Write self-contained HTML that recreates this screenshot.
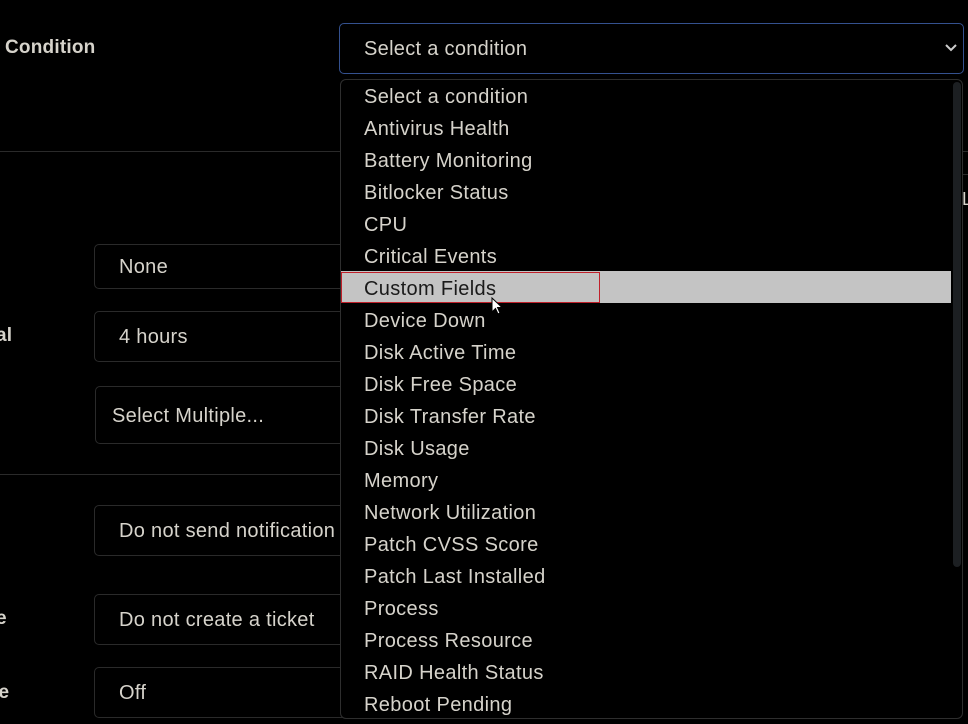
<!DOCTYPE html>
<html><head><style>
body{margin:0;width:968px;height:724px;background:#000;overflow:hidden;position:relative;font-family:"Liberation Sans",sans-serif;color:#d6d3cb}
.a{position:absolute}
.box{position:absolute;border:1px solid #2a2a2a;border-radius:5px;box-sizing:border-box;font-size:20px;letter-spacing:0.3px;padding-left:24px;display:flex;align-items:center;padding-top:2px;white-space:nowrap;overflow:hidden}
.lbl{position:absolute;font-weight:bold;font-size:19px;letter-spacing:0.2px}
.it{position:absolute;left:364px;font-size:20px;letter-spacing:0.35px;line-height:32px;height:32px}
</style></head><body>
<div class="lbl" style="left:5px;top:37px">Condition</div>
<div class="a" style="left:0;top:151px;width:340px;height:1px;background:#2a2a2a"></div>
<div class="a" style="left:0;top:474px;width:340px;height:1px;background:#2a2a2a"></div>
<div class="a" style="left:963px;top:151px;width:5px;height:1px;background:#2a2a2a"></div>
<div class="a" style="left:963px;top:174px;width:5px;height:1px;background:#2a2a2a"></div>
<div class="a" style="left:962px;top:189px;font-size:18px">L</div>
<div class="lbl" style="left:-4px;top:325px">al</div>
<div class="lbl" style="left:-4px;top:608px">e</div>
<div class="lbl" style="left:-8px;top:682px">te</div>
<div class="box" style="left:94px;top:244px;width:300px;height:45px">None</div>
<div class="box" style="left:94px;top:311px;width:300px;height:51px">4 hours</div>
<div class="box" style="left:95px;top:386px;width:300px;height:58px;padding-left:16px">Select Multiple...</div>
<div class="box" style="left:94px;top:505px;width:300px;height:51px">Do not send notification</div>
<div class="box" style="left:94px;top:594px;width:300px;height:51px">Do not create a ticket</div>
<div class="box" style="left:94px;top:667px;width:300px;height:51px">Off</div>
<div class="box" style="left:339px;top:23px;width:625px;height:51px;border:1px solid #34518f;border-radius:5px;overflow:visible">Select a condition
<svg class="a" style="left:604px;top:19px" width="14" height="10" viewBox="0 0 14 10"><path d="M2 2 L7 7 L12 2" stroke="#ccc" stroke-width="2" fill="none"/></svg></div>
<div class="a" style="left:340px;top:79px;width:623px;height:640px;border:1px solid #2e2e2e;border-radius:6px;box-sizing:border-box;background:#000"></div>
<div class="a" style="left:953px;top:82px;width:8px;height:485px;background:#1c1f22;border-radius:4px"></div>
<div class="a" style="left:341px;top:271px;width:610px;height:32px;background:#c4c4c4"></div>
<div class="a" style="left:341px;top:272px;width:259px;height:31px;border:1px solid #c0202a;box-sizing:border-box"></div>
<div class="it" style="top:81px">Select a condition</div>
<div class="it" style="top:113px">Antivirus Health</div>
<div class="it" style="top:145px">Battery Monitoring</div>
<div class="it" style="top:177px">Bitlocker Status</div>
<div class="it" style="top:209px">CPU</div>
<div class="it" style="top:241px">Critical Events</div>
<div class="it" style="top:273px;color:#1a1a1a">Custom Fields</div>
<div class="it" style="top:305px">Device Down</div>
<div class="it" style="top:337px">Disk Active Time</div>
<div class="it" style="top:369px">Disk Free Space</div>
<div class="it" style="top:401px">Disk Transfer Rate</div>
<div class="it" style="top:433px">Disk Usage</div>
<div class="it" style="top:465px">Memory</div>
<div class="it" style="top:497px">Network Utilization</div>
<div class="it" style="top:529px">Patch CVSS Score</div>
<div class="it" style="top:561px">Patch Last Installed</div>
<div class="it" style="top:593px">Process</div>
<div class="it" style="top:625px">Process Resource</div>
<div class="it" style="top:657px">RAID Health Status</div>
<div class="it" style="top:689px">Reboot Pending</div>
<svg class="a" style="left:491px;top:297px" width="12" height="20" viewBox="0 0 12 20"><path d="M1 1 L1 15 L4.5 11.5 L7 17 L9 16 L6.5 10.5 L11 10.5 Z" fill="#fff" stroke="#000" stroke-width="1"/></svg>
</body></html>
